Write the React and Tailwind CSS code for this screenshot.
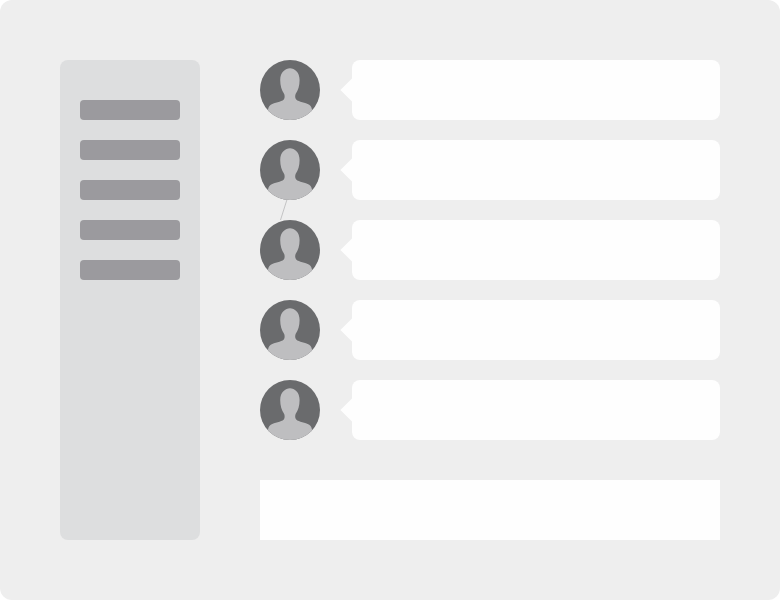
const rows = [0, 1, 2, 3, 4];

function Avatar({ linked }) {
  return (
    <div className="relative size-[60px] shrink-0">
      <svg viewBox="0 0 60 60" className="size-full">
        <defs>
          <clipPath id="avatar-clip">
            <circle cx="30" cy="30" r="30" />
          </clipPath>
        </defs>
        <circle cx="30" cy="30" r="30" fill="#6a6b6d" />
        <path
          clipPath="url(#avatar-clip)"
          fill="#bebec0"
          d="M30 8.3C25.5 8.3 20.2 12.2 20.2 20C20.2 25.5 21.6 30.2 24.2 34C24.8 36 24.9 38 23.8 39.6C21.2 42.2 14.5 42.5 10.8 44.8C8.5 46.3 8.2 48.5 7.8 51L7 60H53L52.3 51C51.8 48.5 51.5 46.3 49.2 44.8C45.5 42.5 38.8 42.2 36.2 39.6C34.9 38 35 36 35.6 34C38.2 30.2 39.6 25.5 39.6 20C39.6 12.2 34.5 8.3 30 8.3Z"
        />
      </svg>
      {linked && (
        <svg viewBox="0 0 10 22" className="absolute left-[19px] top-[59px] h-[22px] w-[10px]">
          <path d="M8 0.5L1.5 21" stroke="#bebec0" strokeWidth="0.9" />
        </svg>
      )}
    </div>
  );
}

function Bubble() {
  return (
    <div className="flex h-[60px] flex-1 items-center">
      <svg viewBox="0 0 12 24" className="h-6 w-3 shrink-0">
        <path d="M12 0.6L0.4 12L12 23.4Z" fill="#fefefe" />
      </svg>
      <div className="h-full flex-1 rounded-lg bg-[#fefefe]" />
    </div>
  );
}

export default function App() {
  return (
    <div className="h-[600px] w-[780px] bg-white">
      <div className="flex h-full gap-[60px] rounded-[12px] bg-[#eeeeee] p-[60px]">
        <aside className="flex w-[140px] flex-col gap-5 rounded-lg bg-[#dddedf] px-5 pt-10">
          {rows.map((i) => (
            <div key={i} className="h-5 rounded bg-[#9b9a9e]" />
          ))}
        </aside>
        <main className="flex flex-1 flex-col justify-between">
          <div className="flex flex-col gap-5">
            {rows.map((i) => (
              <div key={i} className="flex gap-5">
                <Avatar linked={i === 1} />
                <Bubble />
              </div>
            ))}
          </div>
          <div className="h-[60px] bg-[#fefefe]" />
        </main>
      </div>
    </div>
  );
}
